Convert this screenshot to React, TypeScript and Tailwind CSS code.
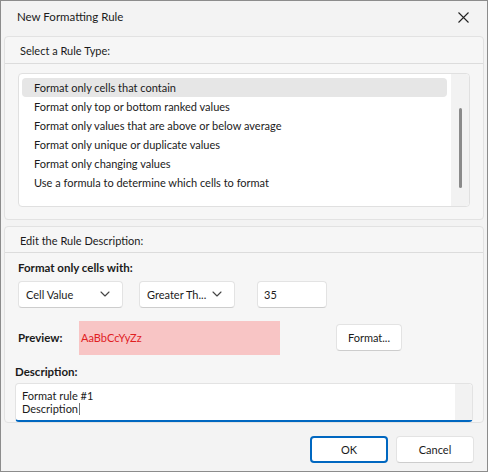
import React from 'react';

const ruleTypes = [
  'Format only cells that contain',
  'Format only top or bottom ranked values',
  'Format only values that are above or below average',
  'Format only unique or duplicate values',
  'Format only changing values',
  'Use a formula to determine which cells to format',
];

function Chevron() {
  return (
    <svg width="10" height="6" viewBox="0 0 10 6" fill="none">
      <path d="M1 1l4 4 4-4" stroke="#444" strokeWidth="1.1" strokeLinecap="round" strokeLinejoin="round" />
    </svg>
  );
}

function Combo({ label, width }: { label: string; width: string }) {
  return (
    <div
      className={`${width} h-[27px] flex items-center justify-between pl-[7px] pr-[12px] bg-white border border-[#e3e3e3] border-b-[#cdcdcd] rounded-[4px] whitespace-nowrap`}
    >
      <span>{label}</span>
      <Chevron />
    </div>
  );
}

export default function App() {
  return (
    <div
      className="w-[488px] h-[472px] bg-[#f3f3f3] border border-[#8c8c8c] flex flex-col text-[11px] text-[#1b1b1b] leading-none"
      style={{ fontFamily: 'Lato, "Noto Sans", sans-serif' }}
    >
      {/* title bar */}
      <div className="h-[32px] flex items-center justify-between pl-[16px] pr-[18px]">
        <span className="text-[11.5px]">New Formatting Rule</span>
        <svg width="11" height="11" viewBox="0 0 11 11">
          <path d="M0.5 0.5l10 10M10.5 0.5l-10 10" stroke="#222" strokeWidth="1.1" />
        </svg>
      </div>

      <div className="mt-[3px] px-[3px] flex flex-col">
        {/* rule type panel */}
        <div className="h-[184px] border border-[#e2e2e2] rounded-[4px] bg-[#f6f6f6] flex flex-col">
          <div className="h-[27px] border-b border-[#dcdcdc] flex items-center pl-[15px] pt-[1px]">
            Select a Rule Type:
          </div>
          <div className="mt-[9px] mx-[13px] h-[134px] bg-white border border-[#e0e0e0] rounded-[4px] flex">
            <div className="flex-1 pt-[4px] pl-[3px] pr-[4px] flex flex-col">
              {ruleTypes.map((t, i) => (
                <div
                  key={t}
                  className={`h-[19px] flex items-center pl-[12px] rounded-[4px] ${i === 0 ? 'bg-[#e6e6e6]' : ''}`}
                >
                  {t}
                </div>
              ))}
            </div>
            <div className="w-[18px] bg-[#f2f2f2] rounded-r-[4px] flex justify-center pt-[34px]">
              <div className="w-[3px] h-[80px] bg-[#8a8a8a] rounded-full ml-[1px]" />
            </div>
          </div>
        </div>

        {/* description panel */}
        <div className="mt-[6px] h-[197px] border border-[#e2e2e2] rounded-[4px] bg-[#f6f6f6] flex flex-col">
          <div className="h-[27px] border-b border-[#dcdcdc] flex items-center pl-[15px] pt-[1px]">
            Edit the Rule Description:
          </div>
          <div className="pl-[13px] pt-[9px] font-bold text-[11.5px]">Format only cells with:</div>
          <div className="mt-[7px] pl-[13px] flex items-center">
            <Combo label="Cell Value" width="w-[105px]" />
            <div className="ml-[16px]">
              <Combo label="Greater Th..." width="w-[96px]" />
            </div>
            <div className="ml-[22px] w-[70px] h-[27px] flex items-center pl-[6px] bg-white border border-[#e3e3e3] border-b-[#cdcdcd] rounded-[4px]">
              35
            </div>
          </div>
          <div className="mt-[13px] pl-[13px] flex items-center">
            <span className="w-[61px] font-bold text-[11.5px]">Preview:</span>
            <div className="w-[201px] h-[34px] bg-[#f8c5c5] flex items-center pl-[2px] text-[#e0201f]">
              AaBbCcYyZz
            </div>
            <div className="ml-[56px] w-[66px] h-[27px] flex items-center justify-center bg-white border border-[#e3e3e3] border-b-[#cdcdcd] rounded-[4px]">
              Format...
            </div>
          </div>
          <div className="mt-[11px] pl-[10px] font-bold text-[11.5px]">Description:</div>
          <div className="mt-[6px] mx-[10px] h-[40px] bg-white border border-[#e3e3e3] border-b-2 border-b-[#0067c0] rounded-[4px] flex">
            <div className="flex-1 pl-[6px] pt-[5px] leading-[13px]">
              <div className="h-[13px]">Format rule #1</div>
              <div className="h-[13px] flex items-center">
                Description
                <span className="inline-block w-[1px] h-[12px] bg-[#777] ml-[1px]" />
              </div>
            </div>
            <div className="w-[17px] bg-[#f2f2f2] rounded-tr-[4px]" />
          </div>
        </div>
      </div>

      {/* buttons */}
      <div className="mt-[13px] pr-[13px] flex justify-end gap-[8px]">
        <div className="w-[78px] h-[27px] flex items-center justify-center bg-white border-2 border-[#0067c0] rounded-[4px]">
          OK
        </div>
        <div className="w-[78px] h-[27px] flex items-center justify-center bg-white border border-[#e3e3e3] border-b-[#cdcdcd] rounded-[4px]">
          Cancel
        </div>
      </div>
    </div>
  );
}
